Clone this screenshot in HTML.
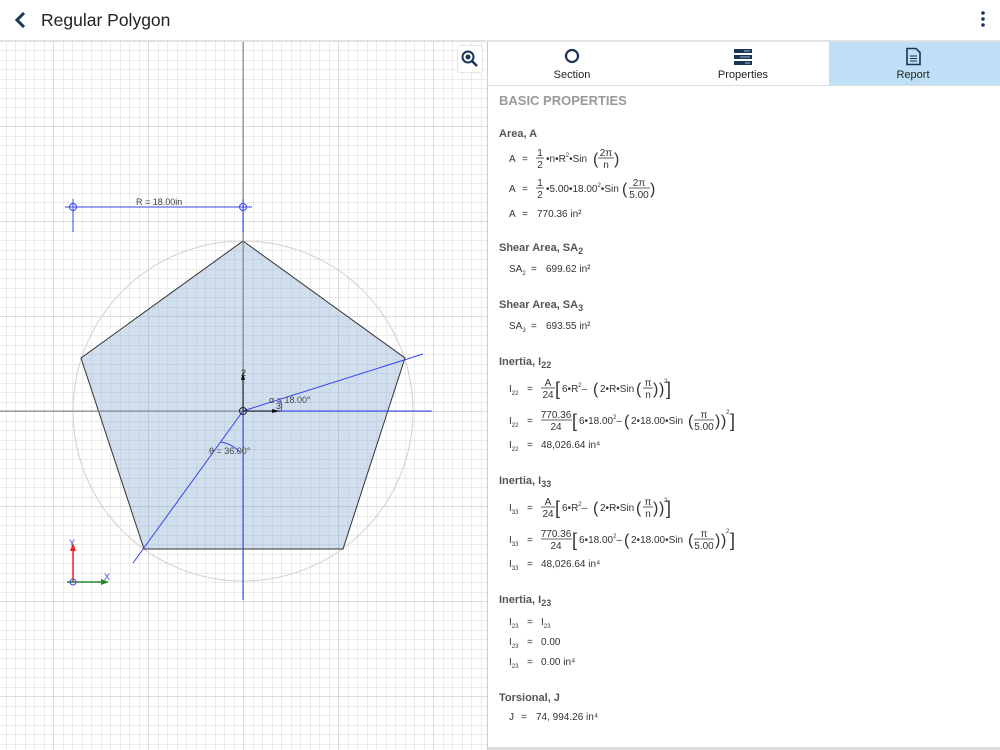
<!DOCTYPE html>
<html><head><meta charset="utf-8"><style>
html,body{margin:0;padding:0;width:1000px;height:750px;overflow:hidden;background:#fff;font-family:"Liberation Sans",sans-serif;}
svg text{font-family:"Liberation Sans",sans-serif;}
</style></head><body>
<svg width="1000" height="750" viewBox="0 0 1000 750" xmlns="http://www.w3.org/2000/svg" style="position:absolute;left:0;top:0">
<defs>
<pattern id="minor" x="53.5" y="31.5" width="9.5" height="9.5" patternUnits="userSpaceOnUse">
<path d="M0 0V9.5M0 0H9.5" stroke="#d9d9d9" stroke-width="1" fill="none"/>
</pattern>
<pattern id="major" x="53.5" y="31.5" width="95" height="95" patternUnits="userSpaceOnUse">
<path d="M0 0V95M0 0H95" stroke="#b9b9b9" stroke-width="1" fill="none"/>
</pattern>
</defs>
<rect x="0" y="0" width="1000" height="41" fill="#fff"/>
<path d="M24 13 L17 20 L24 27" stroke="#1a3556" stroke-width="3" fill="none"/>
<text x="41" y="26" font-size="17.5" fill="#222">Regular Polygon</text>
<circle cx="983" cy="13" r="1.8" fill="#1a3556"/><circle cx="983" cy="19" r="1.8" fill="#1a3556"/><circle cx="983" cy="25" r="1.8" fill="#1a3556"/>
<rect x="0" y="40" width="1000" height="2" fill="#e2e2e2"/>
<rect x="0" y="42" width="487" height="708" fill="url(#minor)"/>
<rect x="0" y="42" width="487" height="708" fill="url(#major)"/>
<rect x="487" y="42" width="1" height="708" fill="#ccc"/>
<circle cx="243" cy="411" r="170" fill="none" stroke="#d0d0d0" stroke-width="1"/>
<polygon points="243,241 405,358 343,549 144,549 81,358" fill="rgba(120,160,205,0.35)" stroke="#333" stroke-width="1"/>
<line x1="0" y1="411" x2="432" y2="411" stroke="#888" stroke-width="1"/>
<line x1="243" y1="42" x2="243" y2="411" stroke="#888" stroke-width="1"/>
<line x1="243" y1="411" x2="243" y2="600" stroke="#3344ee" stroke-width="1"/>
<line x1="280" y1="411" x2="431" y2="411" stroke="#3344ee" stroke-width="1"/>
<line x1="243" y1="411" x2="423" y2="354" stroke="#3344ee" stroke-width="1"/>
<line x1="243" y1="411" x2="133" y2="563" stroke="#3344ee" stroke-width="1"/>
<path d="M280 400 Q283 405 281 411" stroke="#3344ee" fill="none"/>
<path d="M221 442 Q232 444 240 452" stroke="#3344ee" fill="none"/>
<line x1="243" y1="411" x2="243" y2="372" stroke="#111"/><path d="M241 380 L243 372 L245 380Z" fill="#111"/>
<line x1="243" y1="411" x2="280" y2="411" stroke="#111"/><path d="M272 409 L280 411 L272 413Z" fill="#111"/>
<text x="241" y="376" font-size="9" fill="#333">2</text>
<text x="276" y="409" font-size="9" fill="#333">3</text>
<circle cx="243" cy="411" r="3.5" fill="none" stroke="#222"/>
<text x="269" y="403" font-size="9" fill="#444">α = 18.00°</text>
<text x="209" y="454" font-size="9" fill="#444">θ = 36.00°</text>
<line x1="65" y1="207" x2="252" y2="207" stroke="#3344ee"/>
<line x1="73" y1="199" x2="73" y2="232" stroke="#3344ee"/>
<line x1="243" y1="199" x2="243" y2="232" stroke="#3344ee"/>
<circle cx="73" cy="207" r="3.5" fill="none" stroke="#3344ee"/><circle cx="243" cy="207" r="3.5" fill="none" stroke="#3344ee"/>
<text x="136" y="205" font-size="9" fill="#444">R = 18.00in</text>
<line x1="73" y1="582" x2="73" y2="548" stroke="#e22" stroke-width="1.5"/><path d="M70 551 L73 543 L76 551Z" fill="#e22"/>
<line x1="67" y1="582" x2="104" y2="582" stroke="#2a8a2a" stroke-width="1.5"/><path d="M101 579 L109 582 L101 585Z" fill="#2a8a2a"/>
<circle cx="73" cy="582" r="3" fill="none" stroke="#3344ee"/>
<text x="69" y="546" font-size="9" fill="#3344ee">Y</text>
<text x="104" y="580" font-size="9" fill="#3344ee">X</text>
<rect x="457.5" y="45.5" width="25" height="27" rx="3" fill="#fff" stroke="#e6e6e6"/>
<circle cx="468" cy="57" r="5.5" fill="none" stroke="#1a3556" stroke-width="2"/><circle cx="468" cy="57" r="2.5" fill="#1a3556"/>
<line x1="472" y1="61" x2="477" y2="66" stroke="#1a3556" stroke-width="2.5"/>
<rect x="829" y="42" width="171" height="43" fill="#bfdff7"/>
<rect x="488" y="85" width="512" height="1" fill="#ddd"/>
<circle cx="572" cy="56" r="6" fill="none" stroke="#1a3556" stroke-width="2.2"/>
<text x="572" y="78" font-size="11" fill="#222" text-anchor="middle">Section</text>
<rect x="734" y="49" width="18" height="4" fill="#1a3556"/><rect x="734" y="55" width="18" height="4" fill="#1a3556"/><rect x="734" y="61" width="18" height="4" fill="#1a3556"/>
<line x1="744" y1="51" x2="750" y2="51" stroke="#9bb" stroke-width="1"/><line x1="740" y1="57" x2="750" y2="57" stroke="#9bb"/><line x1="745" y1="63" x2="750" y2="63" stroke="#9bb"/>
<text x="743" y="78" font-size="11" fill="#222" text-anchor="middle">Properties</text>
<path d="M907 48.5 H916 L920 52.5 V64.5 H907Z" fill="none" stroke="#1a3556" stroke-width="1.6"/>
<line x1="910" y1="56" x2="917" y2="56" stroke="#1a3556"/><line x1="910" y1="58.5" x2="917" y2="58.5" stroke="#1a3556"/><line x1="910" y1="61" x2="917" y2="61" stroke="#1a3556"/>
<text x="913" y="78" font-size="11" fill="#222" text-anchor="middle">Report</text>
<rect x="488" y="747" width="512" height="3" fill="#ddd"/>
<g fill="#999" font-size="13" font-weight="bold"><text x="499" y="105">BASIC PROPERTIES</text></g>
<g fill="#555" font-size="11" font-weight="bold">
<text x="499" y="137">Area, A</text>
<text x="499" y="251">Shear Area, SA<tspan font-size="9" dy="3">2</tspan></text>
<text x="499" y="308">Shear Area, SA<tspan font-size="9" dy="3">3</tspan></text>
<text x="499" y="365">Inertia, I<tspan font-size="9" dy="3">22</tspan></text>
<text x="499" y="484">Inertia, I<tspan font-size="9" dy="3">33</tspan></text>
<text x="499" y="603">Inertia, I<tspan font-size="9" dy="3">23</tspan></text>
<text x="499" y="701">Torsional, J</text>
</g>
<g fill="#333" font-size="10">
<text x="509" y="162">A</text><text x="522" y="162">=</text>
<text x="540" y="156" text-anchor="middle">1</text><line x1="536" y1="158" x2="544" y2="158" stroke="#333" stroke-width=".8"/><text x="540" y="168" text-anchor="middle">2</text>
<text x="546" y="162">•n•R<tspan font-size="6" dy="-5">2</tspan><tspan dy="5">•Sin</tspan></text>
<text x="593" y="164" font-size="16">(</text><text x="606" y="156" text-anchor="middle">2π</text><line x1="598" y1="158" x2="614" y2="158" stroke="#333" stroke-width=".8"/><text x="606" y="168" text-anchor="middle">n</text><text x="614" y="164" font-size="16">)</text>
<text x="509" y="192">A</text><text x="522" y="192">=</text>
<text x="540" y="186" text-anchor="middle">1</text><line x1="536" y1="188" x2="544" y2="188" stroke="#333" stroke-width=".8"/><text x="540" y="198" text-anchor="middle">2</text>
<text x="546" y="192">•5.00•18.00<tspan font-size="6" dy="-5">2</tspan><tspan dy="5">•Sin</tspan></text>
<text x="622" y="194" font-size="16">(</text><text x="639" y="186" text-anchor="middle">2π</text><line x1="629" y1="188" x2="650" y2="188" stroke="#333" stroke-width=".8"/><text x="639" y="198" text-anchor="middle">5.00</text><text x="650" y="194" font-size="16">)</text>
<text x="509" y="217">A</text><text x="522" y="217">=</text><text x="537" y="217">770.36 in²</text>
<text x="509" y="272">SA<tspan font-size="6" dy="3">2</tspan></text><text x="531" y="272">=</text><text x="546" y="272">699.62 in²</text>
<text x="509" y="329">SA<tspan font-size="6" dy="3">3</tspan></text><text x="531" y="329">=</text><text x="546" y="329">693.55 in²</text>
</g>
<g fill="#333" font-size="10">
<text x="509" y="392">I<tspan font-size="6" dy="3">22</tspan></text><text x="527" y="392">=</text>
<text x="548" y="386" text-anchor="middle">A</text><line x1="541" y1="388" x2="555" y2="388" stroke="#333" stroke-width=".8"/><text x="548" y="398" text-anchor="middle">24</text>
<text x="555" y="395" font-size="18">[</text><text x="562" y="392">6•R<tspan font-size="6" dy="-5">2</tspan><tspan dy="5">–</tspan></text>
<text x="593" y="394" font-size="16">(</text><text x="600" y="392">2•R•Sin</text>
<text x="636" y="394" font-size="16">(</text><text x="648" y="386" text-anchor="middle">π</text><line x1="643" y1="388" x2="653" y2="388" stroke="#333" stroke-width=".8"/><text x="648" y="398" text-anchor="middle">n</text><text x="653" y="394" font-size="16">)</text><text x="659" y="394" font-size="16">)</text><text x="664" y="383" font-size="6">2</text><text x="666" y="395" font-size="18">]</text>
<text x="509" y="424">I<tspan font-size="6" dy="3">22</tspan></text><text x="527" y="424">=</text>
<text x="556" y="418" text-anchor="middle">770.36</text><line x1="541" y1="420" x2="572" y2="420" stroke="#333" stroke-width=".8"/><text x="556" y="430" text-anchor="middle">24</text>
<text x="572" y="427" font-size="18">[</text><text x="579" y="424">6•18.00<tspan font-size="6" dy="-5">2</tspan><tspan dy="5">–</tspan></text>
<text x="624" y="426" font-size="16">(</text><text x="631" y="424">2•18.00•Sin</text>
<text x="688" y="426" font-size="16">(</text><text x="704" y="418" text-anchor="middle">π</text><line x1="694" y1="420" x2="714" y2="420" stroke="#333" stroke-width=".8"/><text x="704" y="430" text-anchor="middle">5.00</text><text x="715" y="426" font-size="16">)</text><text x="721" y="426" font-size="16">)</text><text x="726" y="414" font-size="6">2</text><text x="730" y="427" font-size="18">]</text>
<text x="509" y="448">I<tspan font-size="6" dy="3">22</tspan></text><text x="527" y="448">=</text><text x="541" y="448">48,026.64 in⁴</text>
</g>
<g fill="#333" font-size="10" transform="translate(0,119)">
<text x="509" y="392">I<tspan font-size="6" dy="3">33</tspan></text><text x="527" y="392">=</text>
<text x="548" y="386" text-anchor="middle">A</text><line x1="541" y1="388" x2="555" y2="388" stroke="#333" stroke-width=".8"/><text x="548" y="398" text-anchor="middle">24</text>
<text x="555" y="395" font-size="18">[</text><text x="562" y="392">6•R<tspan font-size="6" dy="-5">2</tspan><tspan dy="5">–</tspan></text>
<text x="593" y="394" font-size="16">(</text><text x="600" y="392">2•R•Sin</text>
<text x="636" y="394" font-size="16">(</text><text x="648" y="386" text-anchor="middle">π</text><line x1="643" y1="388" x2="653" y2="388" stroke="#333" stroke-width=".8"/><text x="648" y="398" text-anchor="middle">n</text><text x="653" y="394" font-size="16">)</text><text x="659" y="394" font-size="16">)</text><text x="664" y="383" font-size="6">2</text><text x="666" y="395" font-size="18">]</text>
<text x="509" y="424">I<tspan font-size="6" dy="3">33</tspan></text><text x="527" y="424">=</text>
<text x="556" y="418" text-anchor="middle">770.36</text><line x1="541" y1="420" x2="572" y2="420" stroke="#333" stroke-width=".8"/><text x="556" y="430" text-anchor="middle">24</text>
<text x="572" y="427" font-size="18">[</text><text x="579" y="424">6•18.00<tspan font-size="6" dy="-5">2</tspan><tspan dy="5">–</tspan></text>
<text x="624" y="426" font-size="16">(</text><text x="631" y="424">2•18.00•Sin</text>
<text x="688" y="426" font-size="16">(</text><text x="704" y="418" text-anchor="middle">π</text><line x1="694" y1="420" x2="714" y2="420" stroke="#333" stroke-width=".8"/><text x="704" y="430" text-anchor="middle">5.00</text><text x="715" y="426" font-size="16">)</text><text x="721" y="426" font-size="16">)</text><text x="726" y="414" font-size="6">2</text><text x="730" y="427" font-size="18">]</text>
<text x="509" y="448">I<tspan font-size="6" dy="3">33</tspan></text><text x="527" y="448">=</text><text x="541" y="448">48,026.64 in⁴</text>
</g>
<g fill="#333" font-size="10">
<text x="509" y="625">I<tspan font-size="6" dy="3">23</tspan></text><text x="527" y="625">=</text><text x="541" y="625">I<tspan font-size="6" dy="3">23</tspan></text>
<text x="509" y="645">I<tspan font-size="6" dy="3">23</tspan></text><text x="527" y="645">=</text><text x="541" y="645">0.00</text>
<text x="509" y="665">I<tspan font-size="6" dy="3">23</tspan></text><text x="527" y="665">=</text><text x="541" y="665">0.00 in⁴</text>
<text x="509" y="720">J</text><text x="521" y="720">=</text><text x="536" y="720">74, 994.26 in⁴</text>
</g>
</svg>
</body></html>
